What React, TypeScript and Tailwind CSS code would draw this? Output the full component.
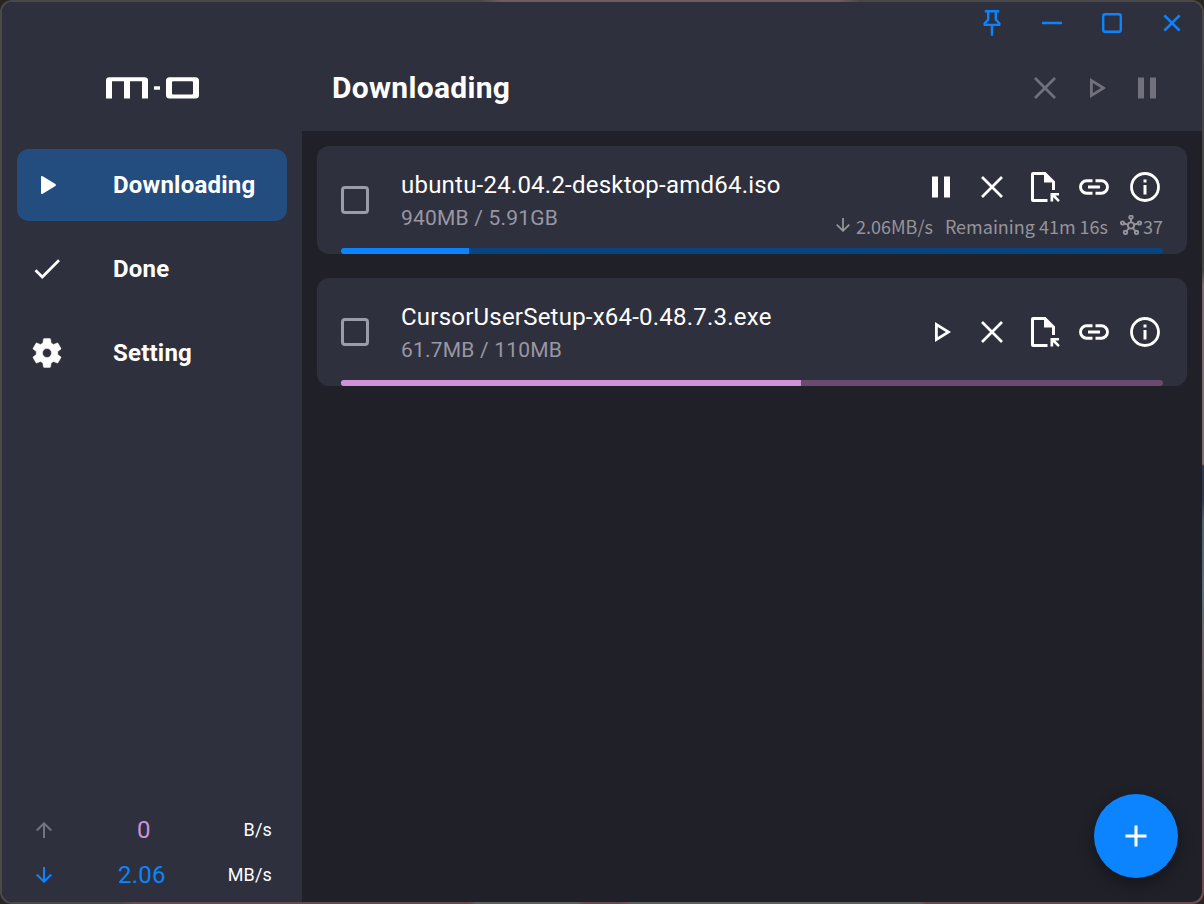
import React from 'react';

type P = { className?: string };

const Svg = ({ w, h, children, className = '' }: { w: number; h: number; children: React.ReactNode; className?: string }) => (
  <svg width={w} height={h} viewBox={`0 0 ${w} ${h}`} fill="none" className={`shrink-0 ${className}`}>{children}</svg>
);

const Logo = () => (
  <Svg w={94} h={22}>
    <path d="M0 21.5V3.5Q0 0.3 3.5 0.3H38.500Q42 0.3 42 3.5V21.5H36V4.2H24V21.5H18V4.2H6V21.5Z" fill="#fff" />
    <path d="M48 9.3h6v3.4h-6z" fill="#fff" />
    <path fillRule="evenodd" d="M63.5 0.3H89.500Q93 0.3 93 3.8V18Q93 21.5 89.500 21.5H63.5Q60 21.5 60 18V3.8Q60 0.3 63.5 0.3ZM67 4.2Q66 4.200 66 5.200V16.500Q66 17.5 67 17.5H86Q87 17.500 87 16.500V5.200Q87 4.200 86 4.2Z" fill="#fff" />
  </Svg>
);

const Pin = () => (
  <Svg w={30} h={30}>
    <path d="M7.8 3.300H22.2M11.2 3.5V11.5L7.700 15.5V16.900H22.300V15.5L18.8 11.500V3.5M15 17V27.800" stroke="currentColor" strokeWidth="2.400" />
  </Svg>
);

const Cross = ({ s = 10, className = '' }: P & { s?: number }) => (
  <Svg w={30} h={30} className={className}>
    <path d={`M${15 - s} ${15 - s}L${15 + s} ${15 + s}M${15 + s} ${15 - s}L${15 - s} ${15 + s}`} stroke="currentColor" strokeWidth="2.700" />
  </Svg>
);

const PlayOutline = ({ className = '' }: P) => (
  <Svg w={30} h={30} className={className}>
    <path fillRule="evenodd" d="M9 4.900L25 15L9 25.100ZM11.800 9.900V20.1L19.900 15Z" fill="currentColor" />
  </Svg>
);

const Pause = () => (
  <Svg w={30} h={30}>
    <path d="M6 4.500h6v21H6zM18 4.500h6v21h-6z" fill="currentColor" />
  </Svg>
);

const FileOpen = () => (
  <Svg w={30} h={30}>
    <path fillRule="evenodd" d="M3 0H15.500L25 9.500V18H22V10.500H14V3H4V27H17.500V30H3Q1 30 1 28V2Q1 0 3 0Z" fill="currentColor" />
    <path d="M20.500 21H29V23.500H25.400L29.800 28.200L28.100 30L23.200 25.200V29.500H20.500Z" fill="currentColor" />
  </Svg>
);

const Link = () => (
  <Svg w={30} h={30}>
    <path d="M13.500 8.800H7.700a6.200 6.200 0 0 0 0 12.400H13.500M16.500 8.800h5.800a6.200 6.200 0 0 1 0 12.400H16.500M9 15H21" stroke="currentColor" strokeWidth="2.900" />
  </Svg>
);

const Info = () => (
  <Svg w={30} h={30}>
    <circle cx="15" cy="15" r="13.500" stroke="currentColor" strokeWidth="2.800" />
    <path d="M13.500 7.500h3v3h-3zM13.500 13h3v9.500h-3z" fill="currentColor" />
  </Svg>
);

const Arrow = ({ up = false, className = '' }: P & { up?: boolean }) => (
  <svg width="16" height="16" viewBox="0 0 16 16" fill="none" className={`shrink-0 ${up ? 'rotate-180' : ''} ${className}`}>
    <path d="M8 0V15M0.800 7.500L8 14.700L15.200 7.500" stroke="currentColor" strokeWidth="2" />
  </svg>
);

const Hub = () => (
  <Svg w={22} h={20} className="mt-[-3px] mr-px">
    <g stroke="currentColor" strokeWidth="1.900">
      <circle cx="11" cy="10.500" r="3.100" />
      <circle cx="11" cy="2.200" r="1.700" />
      <circle cx="2.500" cy="8" r="1.600" />
      <circle cx="19.500" cy="8" r="1.600" />
      <circle cx="5.500" cy="17.400" r="1.700" />
      <circle cx="16.500" cy="17.400" r="1.700" />
      <path d="M11 3.600V7.500M4 8.500L8.100 9.700M18 8.500L13.900 9.700M6.500 16.100L9.200 13M15.500 16.100L12.800 13" />
    </g>
  </Svg>
);

const Gear = () => (
  <svg width="36" height="36" viewBox="0 0 24 24" fill="#fff" stroke="#fff" strokeWidth="0.300">
    <path d="M19.140 12.940c.04-.3.060-.61.060-.94 0-.32-.020-.64-.070-.94l2.030-1.580c.18-.14.23-.41.12-.61l-1.920-3.320c-.12-.22-.37-.29-.59-.22l-2.390.96c-.5-.38-1.030-.7-1.620-.94l-.36-2.540c-.04-.24-.24-.41-.48-.41h-3.840c-.24 0-.43.17-.47.41l-.36 2.540c-.59.24-1.130.57-1.620.94l-2.390-.96c-.22-.08-.47 0-.59.220L2.740 8.870c-.12.21-.08.470.12.610l2.030 1.580c-.05.300-.09.630-.09.940s.02.640.07.940l-2.030 1.580c-.18.140-.23.410-.12.610l1.920 3.320c.12.220.37.290.59.220l2.390-.96c.5.380 1.030.7 1.620.94l.36 2.540c.05.240.24.410.48.410h3.840c.24 0 .44-.17.47-.41l.36-2.540c.59-.24 1.130-.56 1.620-.94l2.390.96c.22.080.47 0 .59-.22l1.920-3.320c.12-.22.070-.47-.12-.61l-2.010-1.580zM12 15a3 3 0 1 1 0-6a3 3 0 0 1 0 6z" />
  </svg>
);

function NavItem({ label, active = false, children }: { label: string; active?: boolean; children: React.ReactNode }) {
  return (
    <button className={`flex h-[72px] w-[270px] items-center rounded-[12px] text-left text-2xl font-bold tracking-[0.22px] text-white ${active ? 'bg-[#234d7f]' : ''}`}>
      <span className="flex w-[60px] justify-center">{children}</span>
      <span className="ml-9">{label}</span>
    </button>
  );
}

function Task({ name, size, running = false }: { name: string; size: string; running?: boolean }) {
  return (
    <article className="flex h-[108px] flex-col overflow-hidden rounded-[12px] bg-[#2f303d] pl-6 pr-6">
      <div className="flex h-[102px]">
        <span className="mt-10 size-7 shrink-0 rounded-[4px] border-3 border-[#9c9ba8]" />
        <div className="ml-8 flex-1 pt-[21px]">
          <h2 className="text-2xl leading-9 font-normal tracking-[0.22px] text-white">{name}</h2>
          <p className="text-[21px] leading-[30px] tracking-[0.2px] text-[#9897a3]">{size}</p>
        </div>
        <div className={`flex flex-col items-end ${running ? 'pt-[26px]' : 'pt-[39px]'}`}>
          <div className="mr-[3px] flex gap-[21px] text-white">
            {running ? <Pause /> : <PlayOutline />}
            <Cross className="mr-[2px]" />
            <FileOpen />
            <span className="-ml-[2px]"><Link /></span>
            <Info />
          </div>
          {running && (
            <div className="mt-[10px] flex h-7 items-center whitespace-nowrap text-[18px] text-[#95959a] [font-family:'Noto_Sans_CJK_SC',sans-serif]">
              <Arrow className="mr-[6px] mt-[-2px] h-[14px] w-[14px]" />
              <span className="mr-3">2.06MB/s</span>
              <span className="mr-3">Remaining 41m 16s</span>
              <Hub />
              <span>37</span>
            </div>
          )}
        </div>
      </div>
      <div className={`h-1.5 overflow-hidden rounded-[3px] ${running ? 'bg-[#07437f]' : 'bg-[#6b4a70]'}`}>
        <div className={`h-full ${running ? 'w-[128px] bg-[#0c84ff]' : 'w-[460px] bg-[#cf92d9]'}`} />
      </div>
    </article>
  );
}

export default function App() {
  return (
    <div className="flex h-[904px] w-[1204px] flex-col overflow-hidden bg-[#292523] font-[Roboto,sans-serif]">
      <div className="flex min-h-0 flex-1 rounded-[12px] p-[2px] [background:linear-gradient(#484846_0px,#454543_270px,#7d666d_285px,#7d6c70_464px,#35374a_466px,#35374a_500px,#4f6169_521px,#5d6e77_590px,#6d6468_640px,#6c5558_780px,#704b4c_904px)_right/6px_100%_no-repeat,linear-gradient(90deg,#484848_0px,#484848_120px,#684a4e_135px,#684a4e_470px,#606062_476px,#606062_575px,#684a4e_585px,#684a4e_620px,#606062_635px,#606062_920px,#684a4e_926px)_bottom/100%_6px_no-repeat,linear-gradient(90deg,#484848_0px,#484848_480px,#6c5b61_500px,#6c5b61_840px,#484848_860px)_top/100%_6px_no-repeat,#4a4a48]">
        <div className="flex min-w-0 flex-1 rounded-[11px] bg-[#202029]">
          <aside className="flex w-[300px] shrink-0 flex-col rounded-l-[11px] bg-[#2f303d]">
            <div className="flex h-[147px] pl-[104px] pt-[75px]"><Logo /></div>
            <nav className="flex flex-col gap-3 pl-[15px]">
              <NavItem label="Downloading" active>
                <Svg w={30} h={30}><path d="M9 7.200Q9 5.200 10.700 6.300L23.400 14.100Q24.700 15 23.400 15.900L10.700 23.700Q9 24.800 9 22.800Z" fill="#fff" /></Svg>
              </NavItem>
              <NavItem label="Done">
                <Svg w={30} h={30}><path d="M3.500 16.300L10.300 23L27 6.300" stroke="#fff" strokeWidth="2.700" /></Svg>
              </NavItem>
              <NavItem label="Setting"><Gear /></NavItem>
            </nav>
            <footer className="mt-auto flex flex-col pb-[5px] pl-[34px] pr-[30px]">
              <div className="flex h-[45px] items-center">
                <Arrow up className="text-[#747481]" />
                <span className="w-[184px] pl-[85px] text-2xl text-[#cf92d9]">0</span>
                <span className="ml-auto text-[18px] tracking-[0.15px] text-white">B/s</span>
              </div>
              <div className="flex h-[45px] items-center">
                <Arrow className="text-[#0c84ff]" />
                <span className="pl-[66px] text-2xl tracking-[0.2px] text-[#0c84ff]">2.06</span>
                <span className="ml-auto text-[18px] tracking-[0.15px] text-white">MB/s</span>
              </div>
            </footer>
          </aside>
          <div className="relative flex min-w-0 flex-1 flex-col">
            <header className="h-[129px] shrink-0 rounded-tr-[11px] bg-[#2f303d]">
              <div className="flex h-[42px] items-center justify-end gap-[30px] pr-[15px] text-[#0c84ff]">
                <Pin />
                <Svg w={30} h={30}><path d="M5 15H25" stroke="currentColor" strokeWidth="2.500" /></Svg>
                <Svg w={30} h={30}><rect x="6.200" y="6.200" width="17.600" height="17.600" rx="2" stroke="currentColor" strokeWidth="2.400" /></Svg>
                <Cross s={7.6} />
              </div>
              <div className="flex h-[87px] items-center justify-between pl-[30px] pr-10">
                <h1 className="text-[30px] font-bold tracking-[0.3px] text-white">Downloading</h1>
                <div className="flex gap-[21px] text-[#71717d]">
                  <Cross />
                  <PlayOutline />
                  <Pause />
                </div>
              </div>
            </header>
            <main className="flex flex-col gap-6 px-[15px] pt-[15px]">
              <Task name="ubuntu-24.04.2-desktop-amd64.iso" size="940MB / 5.91GB" running />
              <Task name="CursorUserSetup-x64-0.48.7.3.exe" size="61.7MB / 110MB" />
            </main>
            <button className="absolute right-6 bottom-6 flex size-[84px] items-center justify-center rounded-full bg-[#0c84ff] shadow-[0_5px_15px_rgba(0,0,0,0.4)]">
              <Svg w={30} h={30}><path d="M15 4.500V25.500M4.500 15H25.500" stroke="#fff" strokeWidth="3" /></Svg>
            </button>
          </div>
        </div>
      </div>
    </div>
  );
}
